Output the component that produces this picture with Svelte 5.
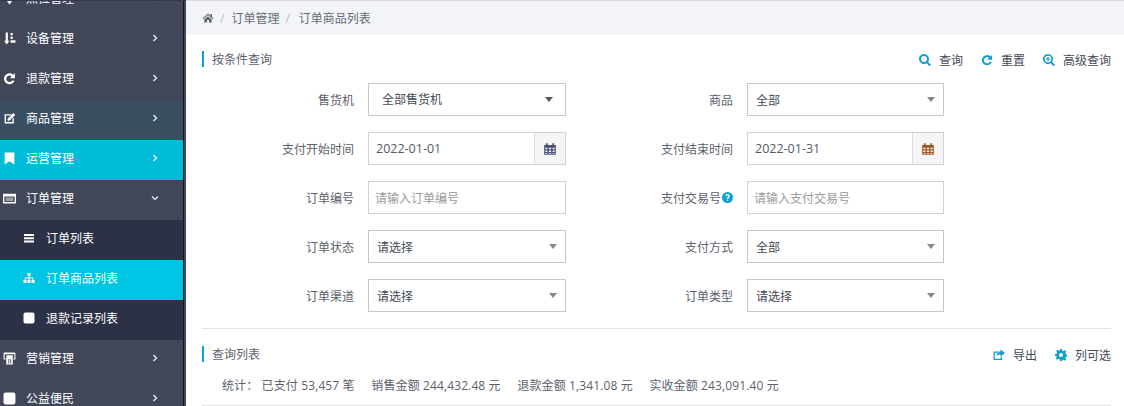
<script>
  const icons = {
    amount: 'M5 1h4v15h3l-5 7-5-7h3zM14 2h4v4h-4zM14 8.500h4V13h-4zM14 15h9v5h-9z',
    repeat: 'M22 2v9.500h-9.500l3.500-3.500a6 6 0 1 0 1.500 7l3.800 1.700A10.200 10.200 0 1 1 19 5z',
    edit: 'M3 4h13l-2.500 2.500H5.500v12h12v-6l2.500-2.500V21H3zM19 2l3.500 3.500L12 16H8.500v-3.500z',
    bookmark: 'M3 1h18v22l-9-6-9 6z',
    listalt: 'M0 3h24v18H0zM2.500 8.500v10h19v-10zM5 10.500h14v1.500H5zM5 14h14v1.500H5z',
    bars: 'M2 4h20v4H2zM2 10.500h20v4H2zM2 17h20v4H2z',
    sitemap: 'M9 2h6v6h-2v3h7.500v5H23v6h-6v-6h2v-3h-6v3h2v6H9v-6h2v-3H5v3h2v6H1v-6h2.500v-5H11V8H9z',
    gift: 'M3 1h18a2 2 0 0 1 2 2v11h-4v-2h2V4H3v8h2v2H1V3a2 2 0 0 1 2-2zM6 6h12v17H6zM10 13v8h1.500v-8zM13.500 13v8H15v-8z',
    square: 'M5 1h14a4 4 0 0 1 4 4v14a4 4 0 0 1-4 4H5a4 4 0 0 1-4-4V5a4 4 0 0 1 4-4z',
    pin: 'M12 1a8 8 0 0 1 8 8c0 5-8 14-8 14S4 14 4 9a8 8 0 0 1 8-8z',
    home: 'M12 3l5 4.500V4h3v6.200l3 2.800-1.400 1.500L12 6 2.400 14.500 1 13zM4.500 15L12 8.500l7.500 6.500v6H14v-5h-4v5H4.500z',
    calendar: 'M2 5h3V2h3v3h8V2h3v3h3v17H2zM4 10v2.500h3.500V10zM10 10v2.500h4V10zM16.500 10v2.500H20V10zM4 14.500V17h3.500v-2.500zM10 14.500V17h4v-2.500zM16.500 14.500V17H20v-2.500zM4 19v1h3.500v-1zM10 19v1h4v-1zM16.500 19v1H20v-1z',
    search: 'M10 0a10 10 0 0 1 8 16l6 5.500-3 3-5.800-6A10 10 0 1 1 10 0zm0 4a6 6 0 1 0 0 12 6 6 0 0 0 0-12z',
    searchplus: 'M10 0a10 10 0 0 1 8 16l6 5.500-3 3-5.800-6A10 10 0 1 1 10 0zm0 3.500a6.500 6.500 0 1 0 0 13 6.500 6.500 0 0 0 0-13zM8.800 6h2.400v2.800H14v2.400h-2.800V14H8.800v-2.800H6V8.800h2.800z',
    share: 'M1 5h11v2.500H3.500v12h12V15H18v7H1zM15 1l9 7-9 7v-4c-4 0-6 1-8 4 0-6 3-10 8-10z',
    cog: 'M10 0h4l.6 3.400 2.400 1 2.800-2 2.800 2.800-2 2.800 1 2.400 3.400.6v4l-3.400.6-1 2.400 2 2.800-2.800 2.800-2.800-2-2.400 1L14 24h-4l-.6-3.400-2.400-1-2.800 2-2.800-2.800 2-2.800-1-2.400L0 14v-4l3.400-.6 1-2.400-2-2.800 2.800-2.800 2.800 2 2.400-1zM12 8a4 4 0 1 0 0 8 4 4 0 0 0 0-8z'
  };

  const menu = [
    { icon: 'pin', label: '点位管理' },
    { icon: 'amount', label: '设备管理' },
    { icon: 'repeat', label: '退款管理' },
    { icon: 'edit', label: '商品管理', cls: 'hover' },
    { icon: 'bookmark', label: '运营管理', cls: 'active' },
    { icon: 'listalt', label: '订单管理', open: true },
    { icon: 'bars', label: '订单列表', sub: true },
    { icon: 'sitemap', label: '订单商品列表', sub: true, cls: 'current' },
    { icon: 'square', label: '退款记录列表', sub: true },
    { icon: 'gift', label: '营销管理' },
    { icon: 'square', label: '公益便民' }
  ];

  const fields = [
    { label: '售货机', type: 'select', value: '全部售货机', wide: true },
    { label: '商品', type: 'select', value: '全部' },
    { label: '支付开始时间', type: 'date', value: '2022-01-01', cal: '#4b5272' },
    { label: '支付结束时间', type: 'date', value: '2022-01-31', cal: '#9a5a2c' },
    { label: '订单编号', type: 'text', value: '请输入订单编号' },
    { label: '支付交易号', type: 'text', value: '请输入支付交易号', help: true },
    { label: '订单状态', type: 'select', value: '请选择' },
    { label: '支付方式', type: 'select', value: '全部' },
    { label: '订单渠道', type: 'select', value: '请选择' },
    { label: '订单类型', type: 'select', value: '请选择' }
  ];
</script>

{#snippet icon(name, size, color)}
  <svg class="icon" width={size} height={size} viewBox="0 0 24 24" fill={color} fill-rule="evenodd"><path d={icons[name]} /></svg>
{/snippet}

<div class="layout">
  <aside class="sidebar">
    <ul class="menu">
      {#each menu as item}
        <li class="item {item.cls ?? ''}" class:sub={item.sub}>
          <span class="item-icon">{@render icon(item.icon, item.sub ? 12 : 13, '#fff')}</span>
          <span class="item-label">{item.label}</span>
          {#if !item.sub}
            <svg class="chevron" width="8" height="8" viewBox="0 0 8 8" fill="none" stroke="#dfe3ea" stroke-width="1.500">
              {#if item.open}<path d="M1 2.500l3 3 3-3" />{:else}<path d="M2.500 1l3 3-3 3" />{/if}
            </svg>
          {/if}
        </li>
      {/each}
    </ul>
  </aside>

  <main class="main">
    <nav class="crumbs">
      {@render icon('home', 12, '#5f6672')}
      <span class="sep">/</span>
      <span>订单管理</span>
      <span class="sep wide">/</span>
      <span>订单商品列表</span>
    </nav>

    <section class="content">
      <header class="bar">
        <h2>按条件查询</h2>
        <div class="tools">
          <span class="tool">{@render icon('search', 12, '#0e9fd0')}查询</span>
          <span class="tool">{@render icon('repeat', 12, '#0e9fd0')}重置</span>
          <span class="tool">{@render icon('searchplus', 12, '#0e9fd0')}高级查询</span>
        </div>
      </header>

      <div class="form">
        {#each fields as f}
          <div class="field">
            <span class="label">{f.label}{#if f.help}<svg class="help" width="11" height="11" viewBox="0 0 12 12"><circle cx="6" cy="6" r="6" fill="#0e9fd0" /><path d="M4.200 4.600a1.800 1.800 0 1 1 2.600 1.600c-.6.300-.8.600-.8 1.100" fill="none" stroke="#fff" stroke-width="1.400" /><rect x="5.300" y="8.300" width="1.400" height="1.400" fill="#fff" /></svg>{/if}</span>
            {#if f.type === 'select'}
              <div class="control select" class:wide={f.wide}>
                <span>{f.value}</span>
                <i class="caret"></i>
              </div>
            {:else if f.type === 'date'}
              <div class="control date">
                <span class="date-value">{f.value}</span>
                <span class="addon">{@render icon('calendar', 14, f.cal)}</span>
              </div>
            {:else}
              <div class="control text">{f.value}</div>
            {/if}
          </div>
        {/each}
      </div>

      <hr />

      <header class="bar list-bar">
        <h2>查询列表</h2>
        <div class="tools">
          <span class="tool">{@render icon('share', 12, '#0e9fd0')}导出</span>
          <span class="tool">{@render icon('cog', 12, '#0e9fd0')}列可选</span>
        </div>
      </header>

      <div class="stats">
        <span>统计：&nbsp;已支付 53,457 笔</span>
        <span>销售金额 244,432.48 元</span>
        <span>退款金额 1,341.08 元</span>
        <span>实收金额 243,091.40 元</span>
      </div>
      <hr class="end" />
    </section>
  </main>
</div>

<style>
  :global(body) {
    margin: 0;
    background: #fff;
    overflow: hidden;
  }

  .layout {
    display: flex;
    height: 406px;
    overflow: hidden;
    font-family: "Open Sans", "Noto Sans CJK SC", sans-serif;
    font-size: 12px;
    color: #5c626c;
  }

  .sidebar {
    width: 186px;
    flex: none;
    box-sizing: border-box;
    background: #414759;
    border-top: 1px solid #35394a;
    overflow: hidden;
  }

  .menu {
    list-style: none;
    width: 183px;
    margin: -21px 0 0;
    padding: 0;
    border-right: 1px solid #14161c;
    min-height: 430px;
  }

  .item {
    display: flex;
    align-items: center;
    height: 40px;
    padding: 0 0 4px 3px;
    color: #fff;
    box-sizing: border-box;
  }

  .item-icon {
    display: flex;
    width: 23px;
  }

  .item-label {
    flex: 1;
  }

  .chevron {
    margin-right: 24px;
  }

  .item.sub {
    background: #2c3146;
    padding-left: 23px;
  }

  .item.hover {
    background: #3a4e61;
  }

  .item.active {
    background: #00bcd9;
  }

  .item.current {
    background: #00c4e3;
  }

  .main {
    flex: 1;
    min-width: 0;
  }

  .crumbs {
    display: flex;
    align-items: center;
    gap: 6px;
    height: 34px;
    padding-left: 16px;
    background: #f3f4f8;
    border-top: 1px solid #d9dade;
    color: #666c76;
  }

  .sep {
    color: #b5b8bf;
    margin-right: 1px;
  }

  .sep.wide {
    margin-right: 3px;
  }

  .content {
    padding: 13px 13px 0 15px;
  }

  .bar {
    display: flex;
    justify-content: space-between;
    align-items: center;
    height: 18px;
    margin-top: 2px;
  }

  h2 {
    margin: 0 0 0 1px;
    padding: 1px 0 0 8px;
    border-left: 2px solid #0e9fd0;
    font-size: 12px;
    font-weight: 400;
    line-height: 15px;
    color: #5c626c;
  }

  .tools {
    display: flex;
    gap: 18px;
    padding-top: 1px;
  }

  .tool {
    display: flex;
    align-items: center;
    gap: 8px;
    color: #444a55;
  }

  .form {
    display: grid;
    grid-template-columns: 379px 379px;
    row-gap: 16px;
    margin-top: 15px;
  }

  .field {
    display: flex;
    align-items: center;
  }

  .label {
    display: flex;
    align-items: center;
    justify-content: flex-end;
    width: 153px;
    margin-right: 14px;
  }

  .help {
    margin-left: 1px;
  }

  .control {
    display: flex;
    align-items: center;
    width: 198px;
    height: 33px;
    box-sizing: border-box;
    border: 1px solid #c9d3d8;
    padding: 0 7px 0 8px;
    background: #fff;
  }

  .field:nth-child(even) .control {
    width: 197px;
  }

  .select {
    justify-content: space-between;
    border-color: #c6c8ca;
    color: #444a55;
  }

  .select.wide {
    padding: 0 11px 1px 13px;
  }

  .caret {
    border: 4px solid transparent;
    border-top: 5px solid #888;
    border-bottom: 0;
    margin-right: 1px;
  }

  .select.wide .caret {
    border-top-color: #555;
  }

  .date {
    padding: 0;
    color: #555b66;
  }

  .date-value {
    flex: 1;
    padding-left: 7px;
    font-size: 12.500px;
  }

  .addon {
    display: flex;
    align-items: center;
    justify-content: center;
    width: 30px;
    height: 100%;
    background: #f5f5f5;
    border-left: 1px solid #dcdfe2;
  }

  .text {
    padding-left: 6px;
    color: #9a9a9a;
  }

  hr {
    border: 0;
    border-top: 1px solid #e2e3e6;
    margin: 16px 0 0 1px;
  }

  .list-bar {
    margin-top: 16px;
  }

  .stats {
    display: flex;
    gap: 16.600px;
    margin-top: 14px;
    padding-left: 21px;
    line-height: 17px;
    letter-spacing: 0.12px;
  }

  .end {
    margin-top: 11px;
  }
</style>
